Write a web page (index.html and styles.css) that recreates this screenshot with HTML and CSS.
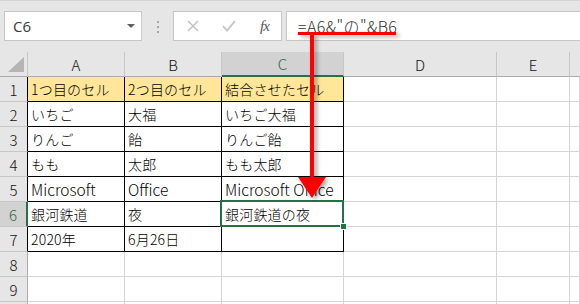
FILE: index.html
```html
<!DOCTYPE html>
<html lang="ja">
<head>
    <meta charset="UTF-8">
    <title>Excel 文字列の結合</title>
    <link rel="stylesheet" href="styles.css">
</head>
<body>
    <div class="app">
        <div class="toolbar">
            <div class="name-box">
                <span class="name-text">C6</span>
                <span class="dropdown"></span>
            </div>
            <div class="grip"><i></i><i></i><i></i></div>
            <div class="fx-buttons">
                <svg class="btn-icon" width="12" height="12" viewBox="0 0 12 12">
                    <path d="M1 1 L11 11 M11 1 L1 11" stroke="#c3c3c3" stroke-width="1.6" fill="none"/>
                </svg>
                <svg class="btn-icon" width="14" height="12" viewBox="0 0 14 12">
                    <path d="M1 6 L5 10.5 L13 1" stroke="#c3c3c3" stroke-width="1.8" fill="none"/>
                </svg>
                <span class="fx">fx</span>
            </div>
            <div class="formula-bar">
                <span class="formula">=A6&amp;"の"&amp;B6</span>
            </div>
        </div>

        <div class="sheet">
            <div class="hd corner"><span class="tri"></span></div>
            <div class="hd col">A</div>
            <div class="hd col">B</div>
            <div class="hd col active-col">C</div>
            <div class="hd col">D</div>
            <div class="hd col">E</div>
            <div class="hd col last"></div>

            <div class="hd row in-table">1</div>
            <div class="c t head-fill">1つ目のセル</div>
            <div class="c t head-fill">2つ目のセル</div>
            <div class="c t head-fill">結合させたセル</div>
            <div class="c"></div><div class="c"></div><div class="c"></div>

            <div class="hd row in-table">2</div>
            <div class="c t">いちご</div>
            <div class="c t">大福</div>
            <div class="c t">いちご大福</div>
            <div class="c"></div><div class="c"></div><div class="c"></div>

            <div class="hd row in-table">3</div>
            <div class="c t">りんご</div>
            <div class="c t">飴</div>
            <div class="c t">りんご飴</div>
            <div class="c"></div><div class="c"></div><div class="c"></div>

            <div class="hd row in-table">4</div>
            <div class="c t">もも</div>
            <div class="c t">太郎</div>
            <div class="c t">もも太郎</div>
            <div class="c"></div><div class="c"></div><div class="c"></div>

            <div class="hd row in-table">5</div>
            <div class="c t latin">Microsoft</div>
            <div class="c t latin">Office</div>
            <div class="c t latin">Microsoft Office</div>
            <div class="c"></div><div class="c"></div><div class="c"></div>

            <div class="hd row active-row">6</div>
            <div class="c t">銀河鉄道</div>
            <div class="c t">夜</div>
            <div class="c t selected">銀河鉄道の夜<span class="handle"></span></div>
            <div class="c"></div><div class="c"></div><div class="c"></div>

            <div class="hd row in-table">7</div>
            <div class="c t">2020年</div>
            <div class="c t">6月26日</div>
            <div class="c t"></div>
            <div class="c"></div><div class="c"></div><div class="c"></div>

            <div class="hd row">8</div>
            <div class="c"></div><div class="c"></div><div class="c"></div>
            <div class="c"></div><div class="c"></div><div class="c"></div>

            <div class="hd row">9</div>
            <div class="c"></div><div class="c"></div><div class="c"></div>
            <div class="c"></div><div class="c"></div><div class="c"></div>

            <div class="hd row"></div>
            <div class="c"></div><div class="c"></div><div class="c"></div>
            <div class="c"></div><div class="c"></div><div class="c"></div>
        </div>

        <!-- 数式から結果セルへの注釈 -->
        <svg class="annotation" width="580" height="304" viewBox="0 0 580 304">
            <defs>
                <filter id="shadow" x="-50%" y="-50%" width="200%" height="200%">
                    <feDropShadow dx="3" dy="2" stdDeviation="2" flood-color="#000" flood-opacity="0.35"/>
                </filter>
            </defs>
            <g filter="url(#shadow)" fill="#ff0000">
                <rect x="298" y="32" width="98" height="3"/>
                <rect x="310" y="35" width="4" height="145"/>
                <polygon points="298,177 326,177 312,198"/>
            </g>
        </svg>
    </div>
</body>
</html>
```

FILE: styles.css
```css
body {
    margin: 0;
    padding: 0;
    background-color: #e6e6e6;
    font-family: "Noto Sans CJK JP", "Noto Sans", sans-serif;
}

.app {
    position: relative;
    width: 580px;
    height: 304px;
    overflow: hidden;
}

/* 数式バー */
.toolbar {
    display: flex;
    align-items: center;
    height: 52px;
    padding: 0 0 0 4px;
    border-top: 1px solid #d4d4d4;
    box-sizing: border-box;
}

.name-box,
.fx-buttons,
.formula-bar {
    height: 30px;
    background-color: #fff;
    border: 1px solid #c6c6c6;
    box-sizing: border-box;
    margin-top: -1px;
}

.name-box {
    width: 138px;
    display: flex;
    align-items: center;
    justify-content: space-between;
    padding: 0 6px 0 8px;
}

.name-text {
    font-family: "Open Sans", "Noto Sans", sans-serif;
    font-size: 15px;
    color: #3a3a3a;
}

.dropdown {
    width: 0;
    height: 0;
    border-left: 4px solid transparent;
    border-right: 4px solid transparent;
    border-top: 4px solid #5f5f5f;
}

.grip {
    width: 31px;
    display: flex;
    flex-direction: column;
    align-items: center;
    gap: 3px;
}

.grip i {
    display: block;
    width: 2px;
    height: 2px;
    background-color: #a6a6a6;
}

.fx-buttons {
    width: 109px;
    display: flex;
    align-items: center;
    padding-left: 13px;
}

.btn-icon {
    margin-right: 23px;
}

.btn-icon + .btn-icon {
    margin-right: 24px;
}

.fx {
    font-family: "Liberation Serif", serif;
    font-style: italic;
    font-size: 15px;
    color: #555;
    letter-spacing: -1px;
}

.formula-bar {
    flex: 1;
    margin-left: 4px;
    border-right: none;
    padding-left: 11px;
    display: flex;
    align-items: center;
}

.formula {
    font-size: 16px;
    font-weight: 300;
    color: #333;
    letter-spacing: 0.4px;
}

/* シート */
.sheet {
    display: grid;
    grid-template-columns: 28px 97px 97px 122px 153px 73px 1fr;
    grid-auto-rows: 25px;
    background-color: #fff;
}

.hd {
    background-color: #e6e6e6;
    color: #111;
    font-size: 15px;
    font-weight: 300;
    display: flex;
    align-items: center;
    justify-content: center;
    box-sizing: border-box;
}

.col {
    border-right: 1px solid #c6c6c6;
    border-bottom: 1px solid #ababab;
}

.col.last {
    border-right: none;
}

.corner {
    border-right: 1px solid #c6c6c6;
    border-bottom: 1px solid #ababab;
    position: relative;
}

.tri {
    position: absolute;
    right: 3px;
    bottom: 4px;
    width: 0;
    height: 0;
    border-left: 16px solid transparent;
    border-bottom: 15px solid #b4b4b4;
}

.active-col {
    background-color: #d2d2d2;
    color: #1e6b3f;
    border-bottom: 2px solid #217346;
}

.row {
    border-right: 1px solid #ababab;
    border-bottom: 1px solid #c6c6c6;
}

.row.in-table {
    border-right-color: #000;
}

.active-row {
    background-color: #d2d2d2;
    color: #1e6b3f;
    border-right: 2px solid #217346;
}

.c {
    border-right: 1px solid #d4d4d4;
    border-bottom: 1px solid #d4d4d4;
    box-sizing: border-box;
    font-size: 14px;
    font-weight: 300;
    color: #000;
    padding-left: 3px;
    display: flex;
    align-items: center;
    white-space: nowrap;
    letter-spacing: 0.2px;
}

.c.latin {
    font-size: 15.5px;
    letter-spacing: 0;
}

.c.t {
    border-right-color: #000;
    border-bottom-color: #000;
}

.head-fill {
    background-color: #ffe699;
}

.selected {
    position: relative;
}

.selected::after {
    content: "";
    position: absolute;
    left: -2px;
    top: -2px;
    right: -1px;
    bottom: -1px;
    border: 2px solid #217346;
}

.handle {
    position: absolute;
    right: -4px;
    bottom: -4px;
    width: 5px;
    height: 5px;
    background-color: #217346;
    border: 1px solid #fff;
    z-index: 1;
}

.annotation {
    position: absolute;
    left: 0;
    top: 0;
    pointer-events: none;
}
```
